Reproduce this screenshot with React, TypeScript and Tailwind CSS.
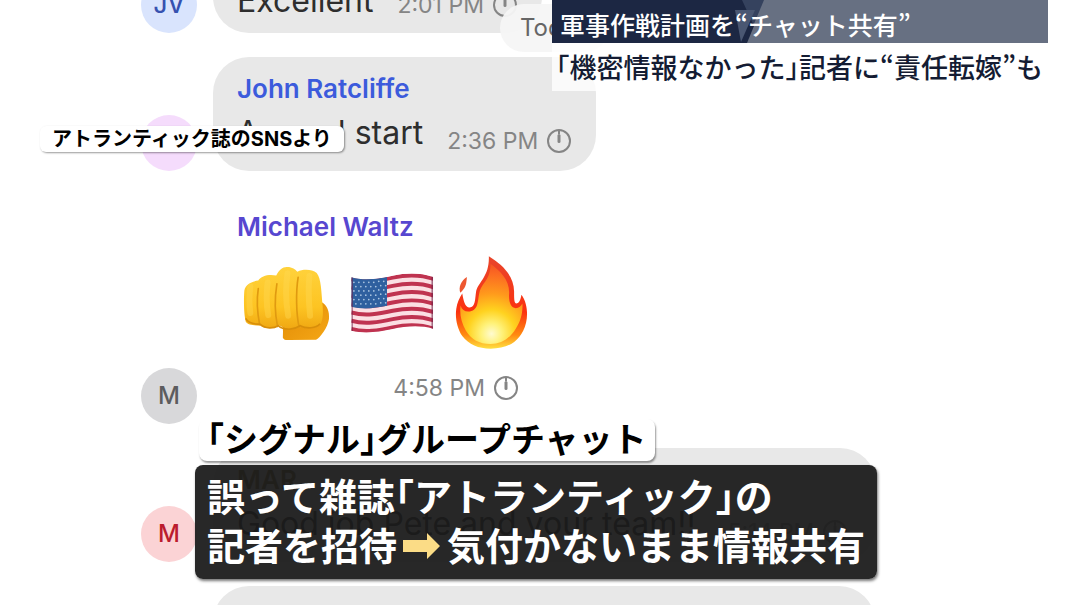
import type { ReactNode } from 'react'

interface MessageProps {
  initials: string
  avatarClass: string
  bubbleClass: string
  children?: ReactNode
}

function Message({ initials, avatarClass, bubbleClass, children }: MessageProps) {
  return (
    <li className="flex items-end gap-4">
      <span
        className={`flex size-14 shrink-0 items-center justify-center rounded-full text-2xl font-medium ${avatarClass}`}
      >
        {initials}
      </span>
      <div className={`pl-6 ${bubbleClass}`}>{children}</div>
    </li>
  )
}

function SentAt({ time }: { time: string }) {
  return (
    <span className="flex items-center gap-2 text-[23px] leading-8 whitespace-nowrap text-[#858585]">
      <time>{time}</time>
      <svg viewBox="0 0 26 26" className="size-[26px]" fill="none" stroke="currentColor" aria-hidden="true">
        <circle cx="13" cy="13" r="11" strokeWidth="2" />
        <path d="M13 2v4" strokeWidth="2" />
        <path d="M13 7.5v6" strokeWidth="3" strokeLinecap="round" />
      </svg>
    </span>
  )
}

function Fist() {
  return (
    <svg viewBox="72 191 262 229" className="h-[76px] w-[87px]" role="img" aria-label="Oncoming fist">
      <defs>
        <linearGradient id="finger" x1="0" y1="0" x2="0" y2="1">
          <stop offset="0" stopColor="#ffd23c" />
          <stop offset="0.65" stopColor="#fdc422" />
          <stop offset="1" stopColor="#f0a813" />
        </linearGradient>
        <linearGradient id="thumb" x1="0" y1="0" x2="1" y2="1">
          <stop offset="0" stopColor="#e08a05" />
          <stop offset="1" stopColor="#f5a716" />
        </linearGradient>
      </defs>
      <path
        d="M190 370c4 14 2 30 2 40 4 8 10 7 18 7l82-1c12-4 36-38 39-62 2-24-6-40-20-50l-40 40z"
        fill="url(#thumb)"
      />
      <path
        d="M76 268c4-20 24-28 42-30 8-14 32-20 54-15 8-18 22-28 34-26 14 0 24 8 30 14 16-8 44-8 58 4 14 16 14 60 18 100 2 30 0 52-14 60-12 8-38 9-50 2-16 8-48 8-66-4-14 10-46 10-58 0-14 0-38 0-44-12-6-24-6-70-4-93z"
        fill="url(#finger)"
      />
      <path
        d="M118 262c-5 32-3 72 4 108M174 248c-7 44-6 90 2 128M238 228c-7 44-6 110 3 150"
        fill="none"
        stroke="#e09a10"
        strokeWidth="5"
        strokeLinecap="round"
      />
      <path
        d="M80 352c10 20 34 16 44 18 14 14 42 12 54 4 18 16 48 12 66 0 20 10 48 8 60-6"
        fill="none"
        stroke="#d88e0a"
        strokeWidth="5"
      />
      <path
        d="M94 256c-4 30-3 58 0 80M146 244c-4 34-3 72 2 98M206 216c-6 40-4 94 2 128M272 224c-4 38-1 90 2 120"
        fill="none"
        stroke="#ffda55"
        strokeWidth="18"
        strokeLinecap="round"
        opacity="0.4"
      />
    </svg>
  )
}

const STRIPES = [0, 1, 2, 3, 4, 5, 6]
const STAR_ROWS = [0, 1, 2, 3, 4, 5]
const STAR_COLS = [0, 1, 2, 3, 4, 5, 6]

function Flag() {
  return (
    <svg viewBox="382 218 252 184" className="h-[61px] w-[84px]" role="img" aria-label="Flag of the United States">
      <defs>
        <clipPath id="flag-shape">
          <path d="M385 234c42 12 85 4 125-5 42-9 82-10 122 4v156c-38-11-82-8-122 1-42 9-84 15-125 5z" />
        </clipPath>
      </defs>
      <g clipPath="url(#flag-shape)">
        <path d="M380 210h260v200H380z" fill="#fbdfe3" />
        {STRIPES.map((n) => (
          <path
            key={n}
            d="M385 240c42 12 85 4 125-5 42-9 82-10 124 4"
            transform={`translate(0 ${n * 25})`}
            fill="none"
            stroke="#bf3350"
            strokeWidth="12"
          />
        ))}
        <path d="M385 230c42 14 78 8 108 2v88c-34 7-72 12-108 3z" fill="#2f609f" />
        {STAR_ROWS.map((row) =>
          STAR_COLS.map((col) => (
            <circle
              key={`${row}-${col}`}
              cx={393 + col * 15 + (row % 2) * 6}
              cy={249 + row * 13 - (col > 4 ? 3 : 0)}
              r="2.6"
              fill="#a9c4e0"
            />
          )),
        )}
        <path d="M385 218h5v190h-5zM627 218h6v190h-6z" fill="#6b1f45" opacity="0.6" />
      </g>
    </svg>
  )
}

function Fire() {
  return (
    <svg viewBox="704 168 224 286" className="h-[95px] w-[75px]" role="img" aria-label="Fire">
      <defs>
        <radialGradient id="flame" gradientUnits="userSpaceOnUse" cx="816" cy="405" r="225">
          <stop offset="0" stopColor="#fffbd0" />
          <stop offset="0.14" stopColor="#fff27a" />
          <stop offset="0.32" stopColor="#ffd21f" />
          <stop offset="0.54" stopColor="#ff9a1c" />
          <stop offset="0.8" stopColor="#fb6a22" />
          <stop offset="1" stopColor="#f04a22" />
        </radialGradient>
        <linearGradient id="flame-edge" x1="0" y1="0" x2="0" y2="1">
          <stop offset="0" stopColor="#e8452b" />
          <stop offset="0.6" stopColor="#fb3210" />
          <stop offset="0.85" stopColor="#ff8a10" />
          <stop offset="1" stopColor="#ffe040" />
        </linearGradient>
      </defs>
      <path
        d="M808 172c36 22 76 56 76 106 0 20 0 34 6 36 10 0 14-12 16-26 18 24 20 58 14 84-4 18-12 32-20 42-20 26-50 36-86 36-38 0-66-12-86-38-16-24-22-56-18-82 2-18 10-34 18-46 4 22 8 40 20 42 20 2 18-24 22-50 8-28 40-44 38-104z"
        fill="url(#flame-edge)"
      />
      <path
        d="M813 194c30 22 58 50 56 90-2 26 6 44 20 44 10 0 16-6 20-14 2 28-6 56-20 76-18 30-44 46-76 46-34 0-58-14-74-40-14-24-20-52-16-76 4 14 14 20 28 18 28-4 22-34 30-62 8-26 32-34 32-82z"
        fill="url(#flame)"
      />
      <path d="M742 234c-2 24-4 32-20 48-6-18 2-36 20-48z" fill="#ed5730" />
    </svg>
  )
}

function Chat() {
  return (
    <ul className="-mt-20 flex flex-col gap-6 pl-[141px]">
      <Message
        initials="JV"
        avatarClass="bg-[#d9e4fd] text-[#3652b0]"
        bubbleClass="flex h-[113px] items-end gap-6 rounded-[36px] bg-[#e8e8e8] pr-6 pb-3"
      >
        <p className="text-[32px] leading-10 text-[#2e2e2e]">Excellent</p>
        <SentAt time="2:01 PM" />
      </Message>

      <Message
        initials="JR"
        avatarClass="bg-[#f5dcfc] text-[#8a3fae]"
        bubbleClass="rounded-[36px] bg-[#e8e8e8] pt-4 pr-6 pb-[14px]"
      >
        <h2 className="text-[26px] leading-8 font-semibold text-[#3c5bdc]">John Ratcliffe</h2>
        <div className="flex items-end gap-6 pt-2">
          <p className="pb-1 text-[32px] leading-10 text-[#2e2e2e]">A good start</p>
          <SentAt time="2:36 PM" />
        </div>
      </Message>

      <Message initials="M" avatarClass="bg-[#d8d8da] text-[#5c5c5e]" bubbleClass="pt-4 pr-6 pb-5">
        <h2 className="text-[26px] leading-8 font-semibold text-[#5747d0]">Michael Waltz</h2>
        <div className="flex items-center gap-5 px-[6px] pt-3 pb-[22px]">
          <Fist />
          <Flag />
          <Fire />
        </div>
        <div className="flex justify-end pr-4">
          <SentAt time="4:58 PM" />
        </div>
      </Message>

      <Message
        initials="M"
        avatarClass="bg-[#fbd3d5] text-[#bb1c2e]"
        bubbleClass="rounded-[36px] bg-[#e8e8e8] pt-4 pr-7 pb-[14px]"
      >
        <h2 className="text-[26px] leading-8 font-semibold text-[#6b4a10]">MAR</h2>
        <div className="flex items-end gap-8 pt-2">
          <p className="pb-1 text-[32px] leading-10 text-black">Good job Pete and your team!!</p>
          <SentAt time="5:14 PM" />
        </div>
      </Message>

      <li className="ml-[72px] h-28 w-[662px] rounded-[36px] bg-[#e8e8e8]" />
    </ul>
  )
}

function Headline() {
  return (
    <header className="absolute top-0 right-[23px] w-[496px] bg-white/80 font-['Noto_Sans_CJK_JP',sans-serif] text-[#141c33] [font-feature-settings:'halt']">
      <div className="relative h-[43px] bg-[#677082] px-2 pt-[6px]">
        <svg
          viewBox="0 0 496 43"
          preserveAspectRatio="none"
          className="absolute inset-0 size-full"
          aria-hidden="true"
        >
          <path d="M0 0h212l-18 43H0z" fill="#35425e" />
          <path d="M0 0h190l12 26-7 17H0z" fill="#1c2743" />
          <path d="M183 10h20l-14 32z" fill="#4a5772" />
        </svg>
        <p className="relative text-[25px] leading-9 font-medium whitespace-nowrap text-white">
          軍事作戦計画を“チャット共有”
        </p>
      </div>
      <h1 className="px-1 pt-[2px] pb-[2px] text-[27px] leading-[44px] font-medium whitespace-nowrap">
        「機密情報なかった」記者に“責任転嫁”も
      </h1>
    </header>
  )
}

function Caption() {
  return (
    <section className="absolute bottom-[26px] left-[195px] w-[682px] [font-feature-settings:'halt']">
      <h2 className="mb-1 ml-1 w-fit rounded-lg bg-white px-2 text-[34px] leading-[42px] font-bold whitespace-nowrap text-black shadow-[1px_2px_2px_#0006]">
        「シグナル」グループチャット
      </h2>
      <p className="rounded-lg bg-[#1c1c1c]/95 px-3 py-2 text-[38px] leading-[49px] font-bold whitespace-nowrap text-white shadow-[1px_2px_3px_#0008]">
        誤って雑誌「アトランティック」の
        <br />
        記者を招待
        <svg viewBox="0 0 38 34" className="mx-[6px] inline h-[34px] w-[38px]" role="img" aria-label="→">
          <path d="M0 7h24V0l13 13-13 13v-7H0z" fill="#fbdc86" />
        </svg>
        気付かないまま情報共有
      </p>
    </section>
  )
}

export default function App() {
  return (
    <main
      lang="ja"
      className="relative h-screen overflow-hidden bg-white font-['Inter','Noto_Sans_CJK_JP',sans-serif]"
    >
      <Chat />
      <span className="absolute top-1 left-[500px] rounded-full bg-[#f6f6f6]/95 px-5 py-2 text-2xl text-[#666]">
        Today
      </span>
      <p className="absolute top-[126px] left-10 rounded-md bg-white px-3 text-xl leading-[26px] font-bold whitespace-nowrap text-black shadow-[1px_1px_2px_#0006]">
        アトランティック誌のSNSより
      </p>
      <Headline />
      <Caption />
    </main>
  )
}
